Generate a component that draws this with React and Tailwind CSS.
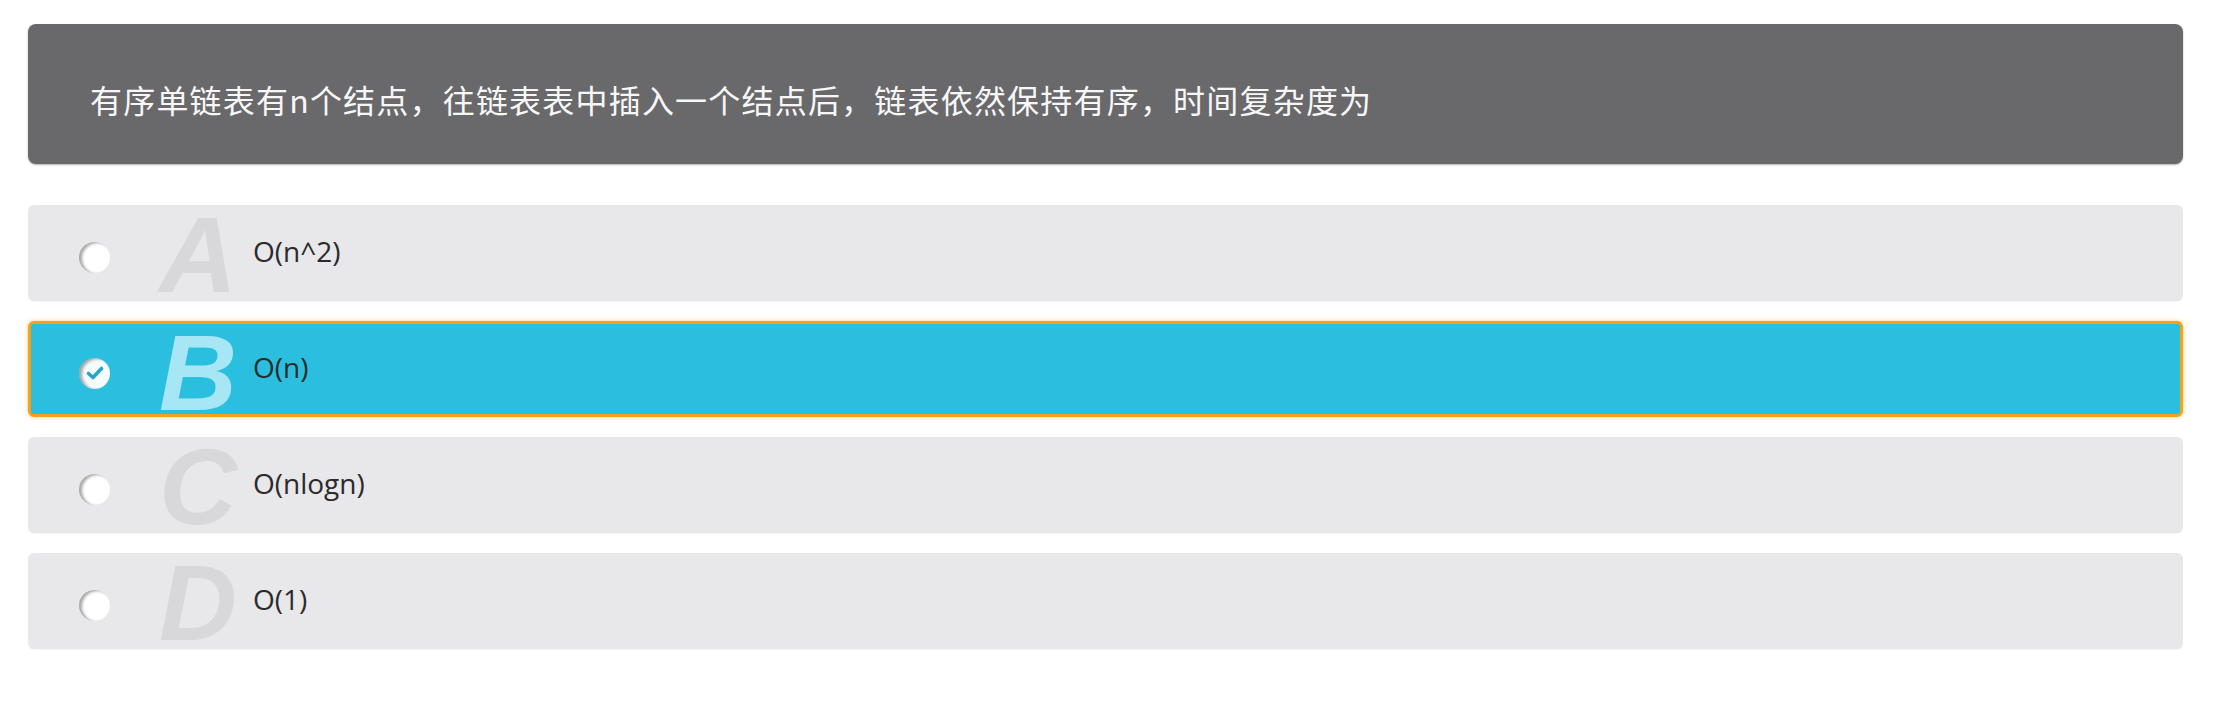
const options = [
  { key: 'A', text: 'O(n^2)' },
  { key: 'B', text: 'O(n)', selected: true },
  { key: 'C', text: 'O(nlogn)' },
  { key: 'D', text: 'O(1)' },
];

function Radio({ checked }) {
  if (checked) {
    return (
      <span className="flex h-[31px] w-[31px] shrink-0 items-center justify-center rounded-full bg-white/95 shadow-[inset_3px_1px_3px_rgba(0,0,0,0.35)]">
        <svg width="22" height="22" viewBox="0 0 22 22" fill="none">
          <path d="M4.5 11.5 L9 15.5 L17.5 6.5" stroke="#2aa3cc" strokeWidth="3.6" strokeLinecap="round" strokeLinejoin="round" />
        </svg>
      </span>
    );
  }
  return (
    <span className="block h-[31px] w-[31px] shrink-0 rounded-full bg-white shadow-[inset_3px_1px_3px_rgba(0,0,0,0.35)]" />
  );
}

function Option({ option }) {
  const selected = option.selected;
  return (
    <div
      className={
        selected
          ? 'flex h-[96px] items-center rounded-md border-[3px] border-[#f5a21b] bg-[#2bbfdf] pl-[48px] shadow-[0_0_4px_rgba(245,166,35,0.6)]'
          : 'flex h-[96px] items-center rounded-md bg-[#e8e7ea] pl-[51px] shadow-[0_1px_1px_rgba(0,0,0,0.04)]'
      }
    >
      <div className="mt-[8px]">
        <Radio checked={selected} />
      </div>
      <div className="ml-[49px] flex h-full w-[94px] shrink-0 items-start overflow-visible">
        <span
          className={
            selected
              ? 'mt-[1px] block font-["Liberation_Sans",Arial,sans-serif] text-[108px] font-bold italic leading-[96px] text-[#a6e6f5]'
              : 'mt-[2px] block font-["Liberation_Sans",Arial,sans-serif] text-[108px] font-bold italic leading-[96px] text-[#d8d8da]'
          }
        >
          {option.key}
        </span>
      </div>
      <span className='mb-[5px] font-["Open_Sans","Noto_Sans",sans-serif] text-[28px] leading-none text-[#2b2b2b]'>
        {option.text}
      </span>
    </div>
  );
}

export default function App() {
  return (
    <div className="min-h-[705px] bg-white pl-[28px] pr-[38px] pt-[24px]">
      <div className='flex h-[140px] items-center rounded-lg bg-[#69686a] pl-[62px] pt-[10px] font-["Noto_Sans_CJK_SC","Noto_Sans",sans-serif] text-[32px] tracking-[1.2px] text-[#f7f7f7] shadow-[0_1px_2px_rgba(0,0,0,0.3)]'>
        有序单链表有n个结点，往链表表中插入一个结点后，链表依然保持有序，时间复杂度为
      </div>
      <div className="mt-[41px] flex flex-col gap-[20px]">
        {options.map((o) => (
          <Option key={o.key} option={o} />
        ))}
      </div>
    </div>
  );
}
